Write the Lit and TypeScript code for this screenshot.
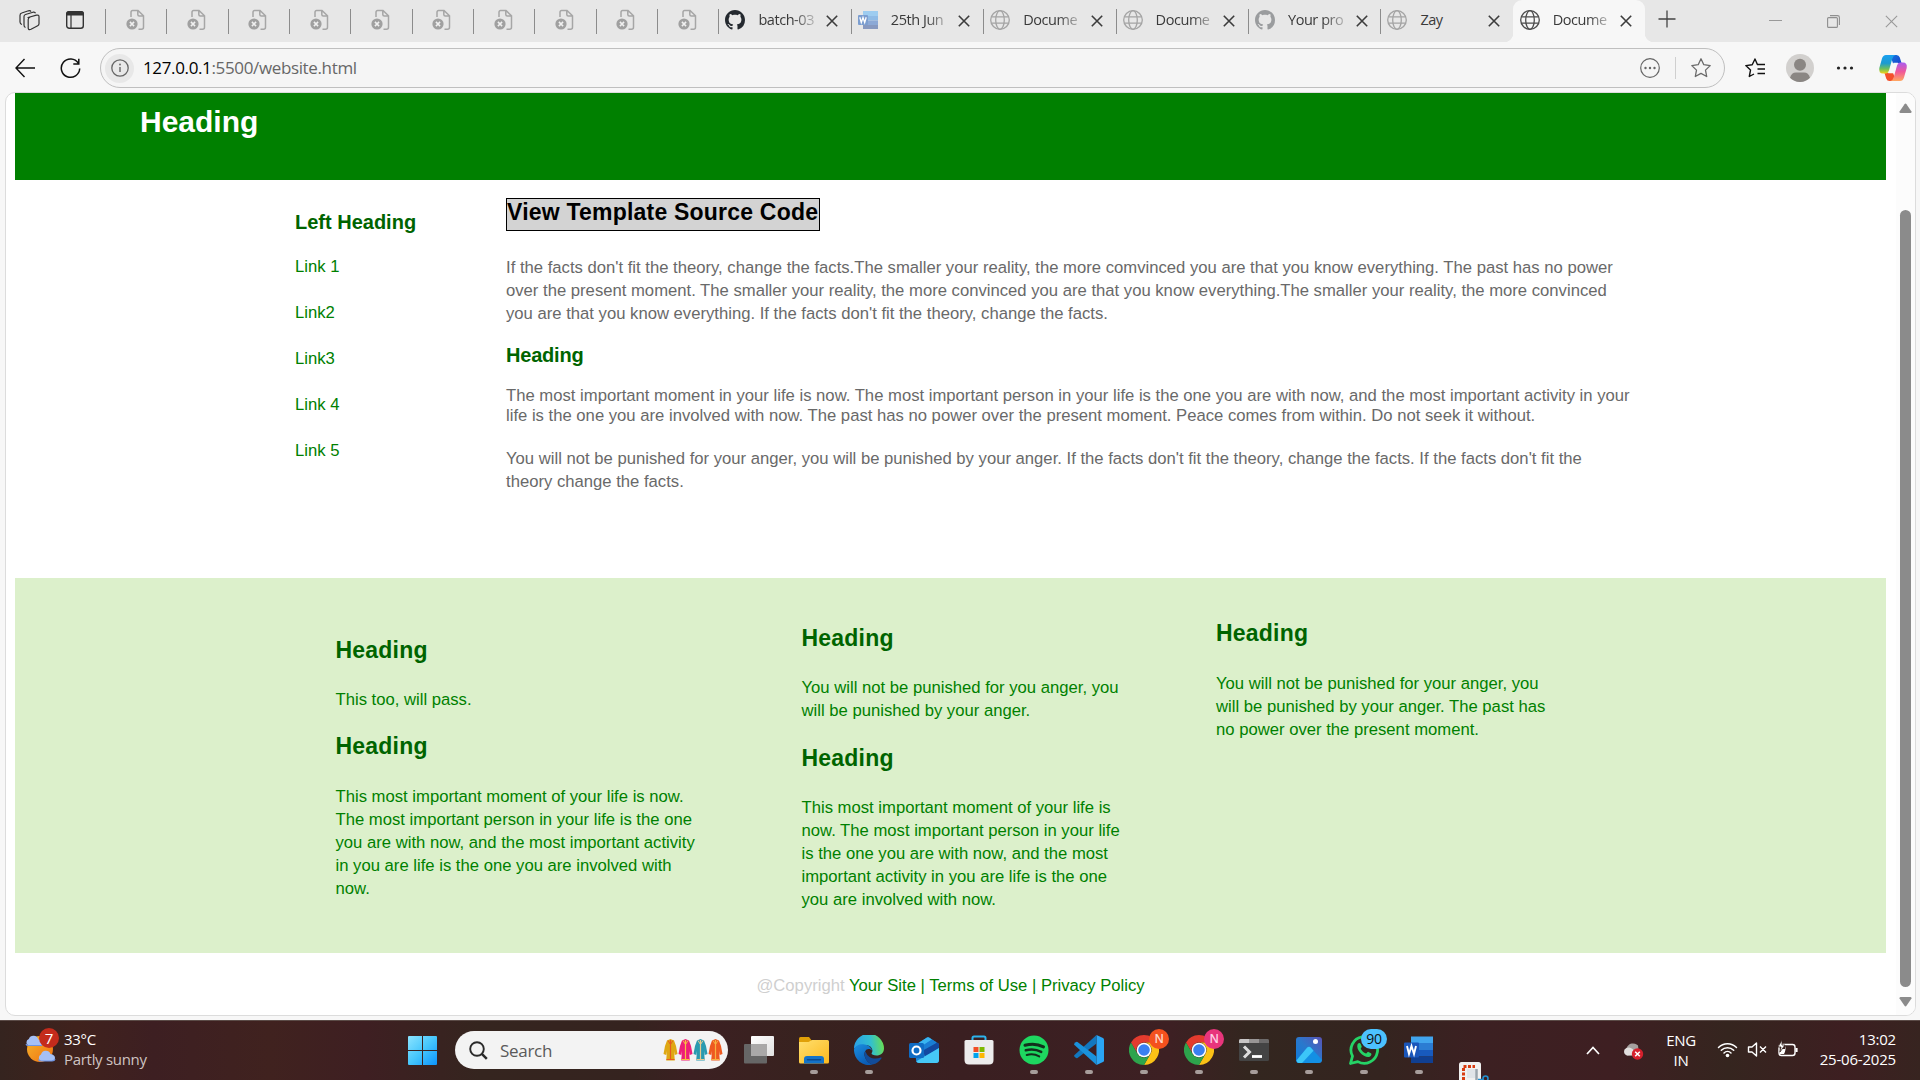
import { LitElement, html, css, svg, type TemplateResult } from "lit";
import { customElement } from "lit/decorators.js";
import { classMap } from "lit/directives/class-map.js";

/* ---------- icon helpers ---------- */
const box = (w: number, h: number, vb: string, body: unknown) =>
  html`<svg width=${w} height=${h} viewBox=${vb} fill="none">${body}</svg>`;

const deadDoc = () => box(20, 22, "0 0 20 22", svg`
  <path d="M5 8V3.2Q5 1.5 6.7 1.5H12l5.5 5.3V18.300q0 2-2 2H12.500M11.800 1.500V5.500q0 1.500 1.500 1.500H17.500" stroke="#a6a6a6" stroke-width="1.5"/>
  <circle cx="6" cy="15" r="5.600" fill="#a0a0a0"/>
  <path d="M3.900 12.900l4.200 4.200M8.100 12.900l-4.200 4.200" stroke="#f0f0f0" stroke-width="1.500"/>`);

const globe = (c: string) => box(20, 20, "0 0 20 20", svg`
  <g stroke=${c} stroke-width="1.3"><circle cx="10" cy="10" r="9.300"/><ellipse cx="10" cy="10" rx="4.300" ry="9.300"/><path d="M1.300 6.800H18.700M1.300 13.200H18.700"/></g>`);

const github = (c: string) => box(20, 20, "0 0 16 16", svg`
  <path fill=${c} d="M8 0C3.58 0 0 3.58 0 8c0 3.54 2.29 6.53 5.47 7.59.4.07.55-.17.55-.38 0-.19-.01-.82-.01-1.49-2.01.37-2.53-.49-2.69-.94-.09-.23-.48-.94-.82-1.130-.28-.15-.68-.52-.01-.53.63-.01 1.080.58 1.230.82.72 1.210 1.870.87 2.330.66.07-.52.28-.87.51-1.070-1.780-.2-3.640-.89-3.640-3.950 0-.87.31-1.590.82-2.150-.08-.2-.36-1.020.08-2.120 0 0 .67-.21 2.200.82.64-.18 1.320-.27 2-.27s1.360.09 2 .27c1.530-1.040 2.200-.82 2.200-.82.44 1.100.16 1.920.08 2.120.51.56.82 1.270.82 2.150 0 3.070-1.870 3.750-3.650 3.950.29.25.54.73.54 1.480 0 1.070-.01 1.930-.01 2.200 0 .21.15.46.55.38A8.010 8.010 0 0 0 16 8c0-4.420-3.580-8-8-8z"/>`);

const wordSmall = () => box(20, 20, "0 0 20 20", svg`
  <rect x="5" y="1" width="15" height="5" fill="#9dccf0"/><rect x="5" y="6" width="15" height="4.500" fill="#8fbbe6"/>
  <rect x="5" y="10.500" width="15" height="4.500" fill="#8ca9d6"/><rect x="5" y="15" width="15" height="4" fill="#8799c0"/>
  <rect x="0" y="5" width="10" height="10" rx="1" fill="#7c9ed0"/>
  <path d="M1.800 7.300l1.500 5.200L5 7.600l1.700 4.900 1.500-5.200" stroke="#fff" stroke-width="1.3"/>`);

const cross = (c: string, s = 12, w = 1.6) => box(s, s, "0 0 12 12", svg`<path d="M.8.8l10.400 10.400M11.200.8L.8 11.200" stroke=${c} stroke-width=${w}/>`);

const star = (c: string) => box(22, 22, "0 0 22 22", svg`
  <path d="M11 1.800l2.800 5.900 6.400.9-4.700 4.500 1.200 6.400L11 16.400l-5.700 3.100 1.200-6.400L1.800 8.600l6.400-.9z" stroke=${c} stroke-width="1.3" stroke-linejoin="round"/>`);

const copilot = () => box(30, 28, "0 0 30 28", svg`
  <defs>
    <linearGradient id="ca" x1="0" y1="0" x2="0" y2="1"><stop offset="0" stop-color="#1aa0f0"/><stop offset=".45" stop-color="#1c9bd0"/><stop offset=".75" stop-color="#6fc05a"/><stop offset="1" stop-color="#f2d41c"/></linearGradient>
    <linearGradient id="cb" x1="0" y1="0" x2="0" y2="1"><stop offset="0" stop-color="#a95cf0"/><stop offset=".5" stop-color="#f0589a"/><stop offset="1" stop-color="#ffa860"/></linearGradient>
    <linearGradient id="cc" x1="0" y1="0" x2="1" y2="1"><stop offset="0" stop-color="#1478e0"/><stop offset="1" stop-color="#1a3cc8"/></linearGradient>
  </defs>
  <path d="M12 1h6.500q2.500 0 3.300 2.500L23.500 9H20q-3 0-4 3z" fill="url(#cc)"/>
  <path d="M18 27h-6.500q-2.500 0-3.300-2.500L6.500 19H10q3 0 4-3z" fill="#f4502c"/>
  <path d="M8 1H17.500Q15.200 1.500 14.200 5L11 16.500Q10 19.500 8 19.500H5Q.5 19.500 1.300 14L4 4.500Q5 1 8 1z" fill="url(#ca)"/>
  <path d="M22 27H12.500Q14.800 26.500 15.800 23L19 11.500Q20 8.500 22 8.500H25Q29.500 8.500 28.700 14L26 23.500Q25 27 22 27z" fill="url(#cb)"/>
  <path d="M15.500 8.800H20Q19 9.500 18.300 12L16.300 19.200H10.200Q11.200 18.500 12 16z" fill="#f7f7f7"/>`);

const chrome = () => box(30, 30, "0 0 30 30", svg`
  <path d="M15 0A15 15 0 0 1 28 7.500H15A7.500 7.500 0 0 0 8.500 18.800L2 7.500A15 15 0 0 1 15 0z" fill="#e33b2e"/>
  <path d="M28 7.500A15 15 0 0 1 15 30L21.500 18.800A7.500 7.500 0 0 0 15 7.500z" fill="#fbc116"/>
  <path d="M2 7.500A15 15 0 0 0 15 30L21.500 18.800A7.500 7.500 0 0 1 8.500 18.800z" fill="#2da44c"/>
  <circle cx="15" cy="15" r="7.300" fill="#fff"/><circle cx="15" cy="15" r="5.800" fill="#3a7ff0"/>`);

const app: Record<string, () => TemplateResult> = {
  view: () => box(32, 30, "0 0 32 30", svg`
    <defs><linearGradient id="tv" x1="0" y1="0" x2="1" y2="1"><stop offset="0" stop-color="#fff"/><stop offset="1" stop-color="#e0e0e0"/></linearGradient></defs>
    <rect x="8" y="1" width="23" height="20" rx="1" fill="url(#tv)"/><rect x="1" y="9" width="23" height="19.500" rx="1" fill="#666"/>
    <rect x="8" y="9" width="16" height="12" fill="#a9a8a8"/>`),
  files: () => box(30, 30, "0 0 30 30", svg`
    <defs><linearGradient id="fg" x1="0" y1="0" x2="1" y2="1"><stop offset="0" stop-color="#ffdf6e"/><stop offset="1" stop-color="#fcb91e"/></linearGradient></defs>
    <path d="M0 3.500Q0 2 1.500 2H10l3 4-3 4H0z" fill="#e0a008"/><path d="M0 7H9.500L13 5H28.500Q30 5 30 6.500V27q0 1.500-1.500 1.500h-27Q0 28.500 0 27z" fill="url(#fg)"/>
    <path d="M5 28.500V24q0-3 3-3H22q3 0 3 3v4.500z" fill="#1473c8"/><path d="M8.500 24.800h13" stroke="#0a4a90" stroke-width="1.500" stroke-linecap="round"/>`),
  edge: () => box(30, 30, "0 0 30 30", svg`
    <defs>
      <linearGradient id="e1" x1="0" y1=".4" x2="1" y2=".3"><stop offset="0" stop-color="#2aa0e6"/><stop offset=".55" stop-color="#32bfd0"/><stop offset="1" stop-color="#6be04c"/></linearGradient>
      <linearGradient id="e2" x1="0" y1="0" x2=".6" y2="1"><stop offset="0" stop-color="#1b8fe0"/><stop offset="1" stop-color="#0a5ab4"/></linearGradient>
    </defs>
    <path d="M0 14A15 15 0 0 1 30 13.500C30 18 26.500 20.500 22.500 20.500c-3.500 0-5.500-1.300-4.800-2.400C19.500 15.500 18 10.500 12 10 6 9.500 1 12 0 14z" fill="url(#e1)"/>
    <path d="M0 14.500C1 11 5.500 8.800 10.500 9.500c4 .6 7 3 7.500 6-1.500-2-5.500-2.500-7 1C9 21 12.500 27.500 18.500 29.600A15 15 0 0 1 0 14.500z" fill="url(#e2)"/>
    <path d="M11.200 16.200C9 21 13 28 18.500 29.600c4-.9 7-3.200 9-6.400.4-.7-.2-1-.8-.7-5.700 2.500-13 .4-14.700-5z" fill="#124b98"/>`),
  outlook: () => box(30, 30, "0 0 30 30", svg`
    <path d="M6 10L18 2.500Q19 2 20 2.500L30 9V25q0 3-3 3H10q-3 0-3-3z" fill="#1b86d8"/>
    <path d="M8 9L18 2.500Q19 2 20 2.500L23 4.500 10 13z" fill="#38b4f0"/><path d="M23 4.500L27 7 13 16.500 10 13z" fill="#1a7dd4"/>
    <path d="M14 15.500L28 7.500 30 9v4L16 22z" fill="#1248a0"/><path d="M30 13V25q0 3-3 3H10q-2 0-2.700-1.800z" fill="#46c8f6"/>
    <rect x="0" y="8" width="15" height="15" rx="1.500" fill="#0f6cc4"/><circle cx="7.500" cy="15.500" r="4" stroke="#fff" stroke-width="2.200"/>`),
  store: () => box(30, 30, "0 0 30 30", svg`
    <path d="M8.500 6V3q0-1.500 1.500-1.500H20q1.500 0 1.500 1.500V6" stroke="#2cb4ee" stroke-width="2"/>
    <path d="M.5 6.500Q.5 5 2 5H28q1.500 0 1.500 1.500V25q0 4.500-4.500 4.500H5Q.5 29.500.5 25z" fill="#ececec"/>
    <path d="M9.500 12h5v5h-5z" fill="#f04e25"/><path d="M15.500 12h5v5h-5z" fill="#7db900"/><path d="M9.500 18h5v5h-5z" fill="#00a3ee"/><path d="M15.500 18h5v5h-5z" fill="#fdb702"/>`),
  spotify: () => box(30, 30, "0 0 30 30", svg`
    <circle cx="15" cy="15" r="14.500" fill="#1ed760"/><g stroke="#12301c" stroke-linecap="round"><path d="M6 10.300c6.500-1.800 13-1.300 18.500 1.600" stroke-width="3"/><path d="M6.800 15.300c5.500-1.500 10.800-.9 15.400 1.600" stroke-width="2.500"/><path d="M7.700 20c4.500-1.200 8.800-.7 12.500 1.400" stroke-width="2"/></g>`),
  code: () => box(30, 30, "0 0 30 30", svg`
    <path d="M22.500 0L29 3Q30 3.500 30 4.500V25.500Q30 26.500 29 27L22.500 30z" fill="#2aa5f4"/>
    <path d="M22.500 0V8.500L3.500 23Q2.500 23.500 1.700 22.800L.4 21.500Q-.2 20.700.5 20z" fill="#1277be"/>
    <path d="M22.500 30V21.500L3.500 7Q2.500 6.500 1.700 7.200L.4 8.500Q-.2 9.300.5 10z" fill="#1a92dc"/>`),
  chrome,
  term: () => box(30, 30, "0 0 30 30", svg`
    <rect x="0" y="4" width="30" height="22" rx="1.500" fill="#444"/><path d="M0 5.500Q0 4 1.500 4H10V8H0z" fill="#c8c6c6"/><path d="M10 4H20V8H10z" fill="#989696"/><path d="M20 4h8.500Q30 4 30 5.500V8H20z" fill="#6c6a6a"/>
    <path d="M5 11.500l5.500 5.500L5 22.500" stroke="#dcdcdc" stroke-width="3"/><path d="M13 21.500H23" stroke="#fff" stroke-width="2.800"/>`),
  photos: () => box(30, 30, "0 0 30 30", svg`
    <defs><linearGradient id="pg" x1="0" y1="1" x2="1" y2="0"><stop offset="0" stop-color="#0c7cdc"/><stop offset=".5" stop-color="#2a78cc"/><stop offset="1" stop-color="#5a52b4"/></linearGradient></defs>
    <rect x="2" y="2" width="26" height="26" rx="3" fill="url(#pg)"/><path d="M2.500 25L13 12.800q2-2 4 0L28 25q-1 3-3 3H5q-2 0-2.500-3z" fill="#1390e4"/>
    <path d="M2.500 25.500L13 12.800q2-2 4 0l2.500 3L8 28H5q-2 0-2.500-2.500z" fill="#3cc6f8"/><circle cx="21.500" cy="6.500" r="2.500" fill="#fff"/>`),
  whats: () => box(30, 30, "0 0 30 30", svg`
    <path d="M1.500 28.500l2-7.300A13.300 13.300 0 1 1 8.800 26.600z" stroke="#25d366" stroke-width="2.800" stroke-linejoin="round"/>
    <path d="M8.500 9.500c1-2 2.500-2 3.200-.5l1 2.400c.3.700-1.200 2-1 2.400 1.200 2.300 3 3.800 5.300 4.700.6.200 1.700-1.900 2.400-1.600l2.600 1.300c1 .5.200 2.800-1.300 3.500C16 23.800 6.500 15.500 8.500 9.500z" fill="#25d366"/>`),
  word: () => box(30, 30, "0 0 30 30", svg`
    <path d="M7 1.500H29V8H7z" fill="#41a5ee"/><path d="M7 8H29v7H7z" fill="#2b7cd3"/><path d="M7 15H29v6.500H7z" fill="#185abd"/><path d="M7 21.500H29V28H7z" fill="#103f91"/>
    <rect x="0" y="7.500" width="15" height="15" rx="1" fill="#1a56ba"/><path d="M3 11l2 8 2.500-8 2.500 8 2-8" stroke="#fff" stroke-width="1.900"/>`),
};

/* ---------- tab strip and toolbar ---------- */
interface Tab { icon: () => TemplateResult; title: string; active?: boolean; plain?: boolean }

const TABS: Tab[] = [
  { icon: () => github("#24292f"), title: "batch-03" },
  { icon: wordSmall, title: "25th Jun" },
  { icon: () => globe("#a4a4a4"), title: "Docume" },
  { icon: () => globe("#a4a4a4"), title: "Docume" },
  { icon: () => github("#9a9c9e"), title: "Your pro" },
  { icon: () => globe("#a4a4a4"), title: "Zay", plain: true },
  { icon: () => globe("#4c4c4c"), title: "Docume", active: true },
];

@customElement("browser-chrome")
class BrowserChrome extends LitElement {
  static styles = css`
    :host { display: block; color: #3a3a3a; font-family: "Open Sans", "Noto Sans", sans-serif; }
    svg { display: block; flex: none; }
    .strip { display: flex; height: 42px; background: #e7e7e7; }
    .lead { display: flex; width: 105px; padding: 10px 0 0 19px; gap: 25px; box-sizing: border-box; }
    .mini { width: 61.35px; box-sizing: border-box; display: flex; padding: 9px 0 0 20.500px; }
    .mini, .tab { background: linear-gradient(#8c8c8c, #8c8c8c) 0 9px / 1.3px 25px no-repeat; }
    .tab { width: 132.4px; box-sizing: border-box; display: flex; padding: 10px 0 0 7px; }
    .title { width: 60px; margin: -2px 0 0 13px; font-size: 14.500px; line-height: 24px; letter-spacing: -0.45px; white-space: nowrap;
      -webkit-mask-image: linear-gradient(90deg, #000 58%, rgba(0, 0, 0, .2) 97%); }
    .title.plain { -webkit-mask-image: none; }
    .x { margin: 4.500px 0 0 7.500px; }
    .active { background: #f7f7f7; border-radius: 9px 9px 0 0; }
    .foot { width: 9px; height: 9px; align-self: flex-end; margin-left: -9px; background: radial-gradient(circle at 0 0, transparent 9px, #f7f7f7 9.500px); }
    .foot.r { margin: 0 -9px 0 0; background: radial-gradient(circle at 100% 0, transparent 9px, #f7f7f7 9.500px); }
    .plus { padding: 10px 0 0 13px; }
    .win { margin-left: auto; display: flex; gap: 45px; padding: 15px 22px 0 0; }
    .bar { display: flex; align-items: center; height: 50px; background: #f7f7f7; box-sizing: border-box; padding: 2px 12px 0 15px; }
    .bar > * { flex: none; }
    .re { margin-left: 24px; }
    .pill { margin-left: 19px; width: 1625px; height: 40px; box-sizing: border-box; border: 1.500px solid #bfbfbf; border-radius: 20px; background: #f5f5f5; display: flex; align-items: center; padding: 0 12px 0 4px; }
    .info { width: 29px; height: 29px; border-radius: 50%; background: #e8e8e8; display: flex; align-items: center; justify-content: center; }
    .url { margin-left: 9px; font-size: 17px; letter-spacing: -0.36px; color: #676767; flex: 1; line-height: 24px; margin-top: -1px; }
    .url b { color: #000; font-weight: 400; }
    .rule { width: 1px; height: 22px; background: #cfcfcf; margin: 0 14px 0 15px; }
    .fav { margin-left: 19px; }
    .me { margin-left: 20px; }
    .dots { margin-left: 22px; }
    .co { margin-left: auto; }
  `;
  render() {
    return html`
      <div class="strip">
        <div class="lead">
          ${box(21, 21, "0 0 21 21", svg`<g stroke="#333" stroke-width="1.200" stroke-linejoin="round"><path d="M9 7.500l8.500-2.300q2.500-.5 2.500 1.500v7q0 1.300-1.300 2l-6.700 3.600q-2.500 1.200-2.800-1.200V9.500q0-1.500 1.500-2z"/><path d="M6.500 17.500Q5 17 5 15V6.500Q5 5 6.500 4.500L14 2.200q2-.5 2.500 1"/><path d="M3 14.500Q1 14 1 12V5.500Q1 3.500 2.700 3L9.500.8q1.800-.4 2.500.8"/></g>`)}
          ${box(20, 20, "0 0 20 20", svg`<rect x="1.700" y="1.700" width="16.600" height="16.600" rx="2.500" stroke="#333" stroke-width="1.400"/><path d="M1 5.500V4q0-3 3-3H16q3 0 3 3V5.500z" fill="#333"/><path d="M6 5V18" stroke="#333" stroke-width="1.200"/>`)}
        </div>
        ${Array.from({ length: 10 }, () => html`<div class="mini">${deadDoc()}</div>`)}
        ${TABS.map((t) => html`
          ${t.active ? html`<i class="foot"></i>` : ""}
          <div class=${classMap({ tab: true, active: !!t.active })}>
            ${t.icon()}<span class=${classMap({ title: true, plain: !!t.plain })}>${t.title}</span>
            <span class="x">${cross("#3c3c3c")}</span>
          </div>
          ${t.active ? html`<i class="foot r"></i>` : ""}`)}
        <div class="plus">${box(18, 18, "0 0 18 18", svg`<path d="M9 .5v17M.5 9h17" stroke="#444" stroke-width="1.300"/>`)}</div>
        <div class="win">
          ${box(13, 13, "0 0 13 13", svg`<path d="M0 5.500H13" stroke="#999"/>`)}
          ${box(13, 13, "0 0 13 13", svg`<g stroke="#8f8f8f" stroke-width="1.100"><rect x=".6" y="2.600" width="9.800" height="9.800" rx="1"/><path d="M3 .6H10.500q1.900 0 1.900 1.900V10"/></g>`)}
          ${cross("#999", 13, 1)}
        </div>
      </div>
      <div class="bar">
        ${box(21, 20, "0 0 21 20", svg`<path d="M20 10H1M9.500 1L1 10l8.500 9" stroke="#111" stroke-width="1.400"/>`)}
        <span class="re">${box(21, 21, "0 0 21 21", svg`<path d="M18.300 5.200A9.200 9.200 0 1 0 19.700 10.500M18.800.8V6H13.300" stroke="#111" stroke-width="1.500"/>`)}</span>
        <div class="pill">
          <span class="info">${box(18, 18, "0 0 18 18", svg`<circle cx="9" cy="9" r="8.200" stroke="#666" stroke-width="1.300"/><path d="M9 8v5" stroke="#666" stroke-width="1.400"/><circle cx="9" cy="5.500" r=".9" fill="#666"/>`)}</span>
          <span class="url"><b>127.0.0.1</b>:5500/website.html</span>
          ${box(20, 20, "0 0 20 20", svg`<circle cx="10" cy="10" r="9.300" stroke="#666" stroke-width="1.200"/><g fill="#666"><circle cx="5.500" cy="10" r="1.200"/><circle cx="10" cy="10" r="1.200"/><circle cx="14.500" cy="10" r="1.200"/></g>`)}
          <i class="rule"></i>${star("#6a6a6a")}
        </div>
        <span class="fav">${box(22, 22, "0 0 22 22", svg`<path d="M13.500 7.700L11 2 8.200 7.700l-6.400.9 4.700 4.500-1.200 6.400L10 17M13 7.500H21" stroke="#111" stroke-width="1.400" stroke-linejoin="round"/><path d="M13.500 12H21M13.500 16.500H21" stroke="#111" stroke-width="1.500"/>`)}</span>
        <span class="me">${box(28, 28, "0 0 28 28", svg`<circle cx="14" cy="14" r="14" fill="#d2d0ce"/><circle cx="14" cy="10.800" r="6" fill="#8a8683"/><path d="M4 23.800Q5.500 18.500 10 18.500h8q4.500 0 6 5.300A14 14 0 0 1 4 23.800z" fill="#8a8683"/>`)}</span>
        <span class="dots">${box(18, 6, "0 0 18 6", svg`<g fill="#222"><circle cx="2.500" cy="3" r="1.600"/><circle cx="9" cy="3" r="1.600"/><circle cx="15.500" cy="3" r="1.600"/></g>`)}</span>
        <span class="co">${copilot()}</span>
      </div>`;
  }
}

/* ---------- web page ---------- */
const lines = (...l: string[]) => l.map((t) => html`<span class="ln">${t}</span>`);

@customElement("site-page")
class SitePage extends LitElement {
  static styles = css`
    :host { display: flex; height: 928px; box-sizing: border-box; padding: 0 4px 4px 5px; background: #f7f7f7; font-family: "Liberation Sans", Arial, sans-serif; font-size: 16.660px; }
    .frame { flex: 1; display: flex; background: #fff; border-radius: 10px; overflow: hidden; border: 1px solid #dcdcdc; box-sizing: border-box; }
    .doc { width: 1871px; margin-left: 9px; }
    h1, h2, h3, p { margin: 0; }
    .ln { display: block; white-space: nowrap; }
    .top { height: 87px; background: #008000; box-sizing: border-box; padding: 11px 0 0 125px; }
    h1 { font-size: 30px; line-height: 36px; color: #fff; }
    .main { display: grid; grid-template-columns: 211px 1fr; height: 398px; padding-left: 280px; box-sizing: border-box; }
    h3 { font-size: 20px; line-height: 24px; color: #006400; }
    .side { padding-top: 30px; }
    .side a { display: block; margin-top: 23px; line-height: 23px; color: #008000; }
    .side h3 + a { margin-top: 21px; }
    .art { padding-top: 18px; color: #696969; }
    .src { display: inline-block; height: 33px; box-sizing: border-box; border: 1px solid #000; background: #d3d3d3; color: #000; font-size: 23px; letter-spacing: .21px; line-height: 27px; white-space: nowrap; width: 314px; }
    .art .p1 { margin-top: 25px; line-height: 23px; }
    .art h3 { margin-top: 18px; letter-spacing: -0.2px; }
    .art .p2 { margin-top: 19px; line-height: 20px; }
    .art .p3 { margin-top: 21px; line-height: 23px; }
    .cols { display: grid; grid-template-columns: 466px 414.500px 1fr; height: 375px; padding-left: 320.500px; box-sizing: border-box; background: #dcf0cb; color: #008000; }
    .cols h2 { font-size: 23px; letter-spacing: .2px; line-height: 29px; color: #006400; margin-bottom: 23px; }
    .cols p { line-height: 23px; margin-bottom: 21px; }
    .cols h2:nth-of-type(2) { margin-bottom: 24px; }
    .c1 { padding-top: 58px; }
    .c2 { padding-top: 46px; }
    .cols .c2 p { margin-bottom: 22px; }
    .cols .c2 h2:nth-of-type(2) { margin-bottom: 23px; }
    .c3 { padding-top: 41px; }
    .cols .c3 h2 { margin-bottom: 24px; }
    .legal { padding: 21px 0 0; text-align: center; line-height: 23px; color: #008000; }
    .legal i { font-style: normal; color: #cfcfcf; }
    .sb { margin-left: auto; width: 19px; background: #fcfcfc; display: flex; flex-direction: column; align-items: center; padding: 10px 0 8px; box-sizing: border-box; }
    .thumb { width: 11px; height: 777px; margin: auto 0 10px; border-radius: 6px; background: #8b8b8b; }
    svg { display: block; }
  `;
  render() {
    return html`<div class="frame">
      <div class="doc">
        <header class="top"><h1>Heading</h1></header>
        <section class="main">
          <nav class="side"><h3>Left Heading</h3>${["Link 1", "Link2", "Link3", "Link 4", "Link 5"].map((l) => html`<a>${l}</a>`)}</nav>
          <article class="art">
            <b class="src">View Template Source Code</b>
            <p class="p1">${lines(
              "If the facts don't fit the theory, change the facts.The smaller your reality, the more comvinced you are that you know everything. The past has no power",
              "over the present moment. The smaller your reality, the more convinced you are that you know everything.The smaller your reality, the more convinced",
              "you are that you know everything. If the facts don't fit the theory, change the facts.")}</p>
            <h3>Heading</h3>
            <p class="p2">${lines(
              "The most important moment in your life is now. The most important person in your life is the one you are with now, and the most important activity in your",
              "life is the one you are involved with now. The past has no power over the present moment. Peace comes from within. Do not seek it without.")}</p>
            <p class="p3">${lines(
              "You will not be punished for your anger, you will be punished by your anger. If the facts don't fit the theory, change the facts. If the facts don't fit the",
              "theory change the facts.")}</p>
          </article>
        </section>
        <section class="cols">
          <div class="c1">
            <h2>Heading</h2><p>This too, will pass.</p>
            <h2>Heading</h2><p>${lines("This most important moment of your life is now.", "The most important person in your life is the one", "you are with now, and the most important activity", "in you are life is the one you are involved with", "now.")}</p>
          </div>
          <div class="c2">
            <h2>Heading</h2><p>${lines("You will not be punished for you anger, you", "will be punished by your anger.")}</p>
            <h2>Heading</h2><p>${lines("This most important moment of your life is", "now. The most important person in your life", "is the one you are with now, and the most", "important activity in you are life is the one", "you are involved with now.")}</p>
          </div>
          <div class="c3">
            <h2>Heading</h2><p>${lines("You will not be punished for your anger, you", "will be punished by your anger. The past has", "no power over the present moment.")}</p>
          </div>
        </section>
        <footer class="legal"><i>@Copyright</i> Your Site | Terms of Use | Privacy Policy</footer>
      </div>
      <div class="sb">
        ${box(13, 10, "0 0 13 10", svg`<path d="M6.500.5Q7 .5 7.500 1.200L12.500 8.500Q12.800 10 11.500 10H1.500Q.2 10 .5 8.500L5.500 1.200Q6 .5 6.500.5z" fill="#8b8b8b"/>`)}
        <div class="thumb"></div>
        ${box(13, 10, "0 0 13 10", svg`<path d="M6.500 9.500Q6 9.500 5.500 8.800L.5 1.500Q.2 0 1.500 0h10Q12.800 0 12.500 1.500L7.500 8.800Q7 9.500 6.500 9.500z" fill="#8b8b8b"/>`)}
      </div>
    </div>`;
  }
}

/* ---------- taskbar ---------- */
interface App { id: string; run?: boolean; badge?: string; tone?: string }
const APPS: App[] = [
  { id: "view" }, { id: "files", run: true }, { id: "edge", run: true }, { id: "outlook" }, { id: "store" },
  { id: "spotify", run: true }, { id: "code", run: true },
  { id: "chrome", run: true, badge: "N", tone: "orange" }, { id: "chrome", run: true, badge: "N", tone: "pink" },
  { id: "term", run: true }, { id: "photos", run: true }, { id: "whats", run: true, badge: "90", tone: "blue" }, { id: "word", run: true },
];

const robe = (x: number, c: string, d: string) => svg`
  <g transform="translate(${x} 0)"><path d="M4 1.500L7.500 0 11 1.500 13 7l1.500 8-2.700 1L11 12l.8 9.500H3.200L4 12l-.8 4-2.700-1L2 7z" fill=${c}/><path d="M7.500 1v20" stroke=${d} stroke-width="1.200"/><path d="M5 1.500l2.500 4 2.500-4M3.500 20.500h8" stroke=${d}/></g>`;

@customElement("task-bar")
class TaskBar extends LitElement {
  static styles = css`
    :host { display: flex; height: 60px; box-sizing: border-box; border-top: 1px solid #5b4b47; color: #fff; font-family: "Open Sans", "Noto Sans", sans-serif; font-size: 15px; letter-spacing: -0.3px; line-height: 20px; overflow: hidden;
      background: linear-gradient(90deg, #35241f 0, #40221d 4%, #3d1f22 8%, #40221f 14%, #3e1f22 19%, #35251f 25%, #35231f 33%, #3c2022 36%, #38221f 42%, #3a1f21 50%, #3d2023 61%, #33261f 65%, #34241f 72%, #3c2022 77%, #3e1f22 84%, #35251f 90%, #3d1f21 96%, #372420); }
    svg { display: block; }
    .wx { display: flex; width: 408px; padding: 8px 0 0 25px; box-sizing: border-box; gap: 8px; }
    .pic { position: relative; width: 31px; height: 40px; }
    .pic svg { margin-top: 5px; }
    .seven { position: absolute; left: 14px; top: -1px; width: 20px; height: 20px; border-radius: 50%; background: #c42b1c; text-align: center; line-height: 20px; }
    .wx small { display: block; font-size: 15px; color: #cfc4c2; }
    .start { padding-top: 15px; width: 47px; box-sizing: border-box; }
    .find { margin-top: 10px; width: 273px; height: 38px; border-radius: 19px; background: #f3f3f3; display: flex; align-items: center; padding: 0 5px 0 14px; box-sizing: border-box; color: #5a5a5a; font-size: 17px; }
    .find span { flex: 1; margin: 1px 0 0 12px; }
    .apps { display: flex; margin-left: 3px; }
    .slot { width: 55px; position: relative; display: flex; flex-direction: column; align-items: center; padding-top: 14px; box-sizing: border-box; }
    .dot { width: 8px; height: 4px; border-radius: 2px; background: #a79d9b; margin-top: 5px; }
    .badge { position: absolute; top: 8px; left: 33px; min-width: 20px; height: 20px; border-radius: 10px; text-align: center; line-height: 20px; font-size: 12px; font-weight: 600; box-sizing: border-box; }
    .orange { background: #f4511e; color: #ffd8c8; }
    .pink { background: #e8357c; color: #ffd0e4; }
    .blue { background: #4cc2ff; color: #111; font-size: 14px; font-weight: 400; left: 25px; width: 26px; }
    .snip { margin: 41px 0 0 13px; }
    .tray { margin-left: auto; display: flex; padding-right: 24px; }
    .chev { margin: 25px 23px 0 0; }
    .cloud { margin: 21px 22px 0 0; }
    .lang { width: 30px; text-align: center; padding-top: 9px; margin-right: 21px; }
    .ics { display: flex; gap: 9px; padding-top: 18px; }
    .clock { text-align: right; padding-top: 8px; width: 97px; letter-spacing: -0.2px; }
  `;
  render() {
    return html`
      <div class="wx">
        <div class="pic">
          ${box(31, 31, "0 0 31 31", svg`<defs><linearGradient id="sn" x1="0" y1="0" x2="1" y2="1"><stop offset="0" stop-color="#f6b62c"/><stop offset="1" stop-color="#f07010"/></linearGradient></defs>
            <circle cx="15" cy="15" r="13" fill="url(#sn)"/><path d="M3.500 11.500a3.500 3.500 0 0 1 .3-6.500 5 5 0 0 1 9.500.5q4 .5 3.500 6z" fill="#a5c0f6"/><path d="M1 10Q1.500 11.500 3.500 11.500H17" stroke="#6e94e4" stroke-width="1.200"/>
            <path d="M16 27a3.500 3.500 0 0 1 0-6.500 5 5 0 0 1 9.500-.5q4.500.8 4.500 4 0 3-3.500 3z" fill="#a5c0f6"/><path d="M13.500 25.500Q14 27 16 27H27q2.500-.2 3-2" stroke="#6e94e4" stroke-width="1.200"/>`)}
          <span class="seven">7</span>
        </div>
        <div>33°C<small>Partly sunny</small></div>
      </div>
      <div class="start">${box(29, 29, "0 0 29 29", svg`<defs><linearGradient id="st" x1="0" y1="0" x2="29" y2="29" gradientUnits="userSpaceOnUse"><stop offset="0" stop-color="#8ce4ff"/><stop offset=".5" stop-color="#46c6fc"/><stop offset="1" stop-color="#0c94fc"/></linearGradient></defs><path d="M1 0H14V14H0V1Q0 0 1 0zM15 0H28q1 0 1 1V14H15zM0 15H14V29H1Q0 29 0 28zM15 15H29V28q0 1-1 1H15z" fill="url(#st)"/>`)}</div>
      <div class="find">
        ${box(19, 19, "0 0 19 19", svg`<circle cx="8" cy="8" r="6.800" stroke="#2a2a2a" stroke-width="1.900"/><path d="M12.800 12.800l5 5" stroke="#2a2a2a" stroke-width="2.500"/>`)}
        <span>Search</span>
        ${box(60, 22, "0 0 60 22", svg`${robe(0, "#dfa814", "#e85a20")}${robe(15, "#ee1f78", "#f8c040")}${robe(30, "#2a9ab0", "#e8c890")}${robe(45, "#ee5a20", "#f8b040")}`)}
      </div>
      <div class="apps">${APPS.map((a) => html`<div class="slot">${app[a.id]()}${a.run ? html`<i class="dot"></i>` : ""}${a.badge ? html`<span class="badge ${a.tone}">${a.badge}</span>` : ""}</div>`)}</div>
      <div class="snip">${box(32, 22, "0 0 32 22", svg`<rect x="0" y="0" width="22" height="22" rx="2.500" fill="#f0f0f0"/><path d="M4.500 18V4.500H16" stroke="#d83b10" stroke-width="3" stroke-dasharray="3 1.500"/><rect x="8" y="7" width="8" height="9" fill="#e0e4e8"/><path d="M17.500 7v12" stroke="#9aa4ac" stroke-width="2.500"/><path d="M19 17.500h5" stroke="#2090d0" stroke-width="1.500"/><circle cx="26.500" cy="16.500" r="2.500" stroke="#2090d0" stroke-width="1.600"/>`)}</div>
      <div class="tray">
        <div class="chev">${box(14, 9, "0 0 14 9", svg`<path d="M1 8l6-6.500L13 8" stroke="#fff" stroke-width="1.700"/>`)}</div>
        <div class="cloud">${box(21, 18, "0 0 21 18", svg`<path d="M4 13.500A4 4 0 0 1 3.500 6 7 7 0 0 1 15 3.500l1 9z" fill="#a5a09e"/><path d="M4 13.500A4 4 0 0 1 3.500 6Q7 4.500 9.500 7l5 6.500z" fill="#e2dfde"/><circle cx="14.500" cy="12" r="5.700" fill="#d6202c"/><path d="M12.200 9.700l4.600 4.600M16.800 9.700l-4.600 4.600" stroke="#fff" stroke-width="1.500"/>`)}</div>
        <div class="lang">ENG<br>IN</div>
        <div class="ics">
          ${box(21, 20, "0 0 21 20", svg`<g stroke="#fff" stroke-width="1.500" stroke-linecap="round"><path d="M1.500 8.500a12.700 12.700 0 0 1 18 0M4.300 11.300a8.700 8.700 0 0 1 12.400 0M7 14a5 5 0 0 1 7 0"/></g><circle cx="10.500" cy="16.500" r="1.800" fill="#fff"/>`)}
          ${box(21, 20, "0 0 21 20", svg`<path d="M1.500 8v5H5l4.500 4V4L5 8zM13 7.500l6 6M19 7.500l-6 6" stroke="#fff" stroke-width="1.400" stroke-linejoin="round"/>`)}
          ${box(22, 20, "0 0 22 20", svg`<rect x="2" y="5.500" width="16" height="11" rx="2.500" stroke="#fff" stroke-width="1.400"/><path d="M19.500 9v4" stroke="#fff" stroke-width="2.200"/><path d="M3 15V10h5V7q1.500 3-1 8z" fill="#fff"/><path d="M5 1L1 8h3l-1 5 5-7H5z" fill="#fff" stroke="#38231f" stroke-width=".8"/>`)}
        </div>
        <div class="clock">13:02<br>25-06-2025</div>
      </div>`;
  }
}

@customElement("app-root")
class AppRoot extends LitElement {
  static styles = css`
    :host { display: block; width: 1920px; height: 1080px; overflow: hidden; }
  `;
  render() {
    return html`<browser-chrome></browser-chrome><site-page></site-page><task-bar></task-bar>`;
  }
}
